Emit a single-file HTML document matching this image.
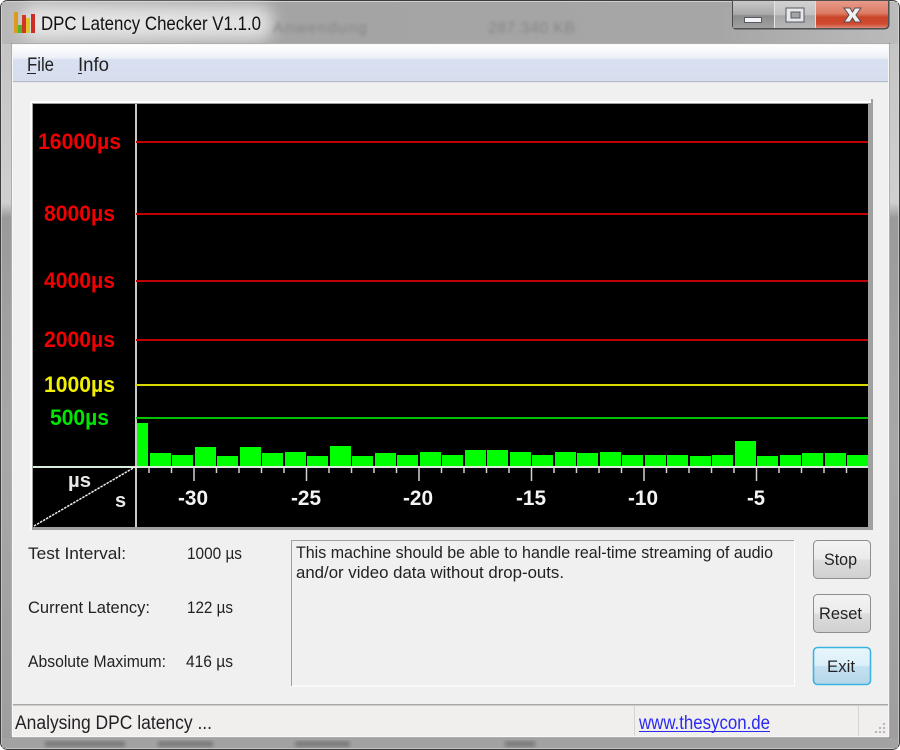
<!DOCTYPE html>
<html><head><meta charset="utf-8"><style>
html,body{margin:0;padding:0;background:#a5a5a5;width:900px;height:750px;overflow:hidden}
svg{display:block}
text{font-family:"Liberation Sans",sans-serif}
</style></head><body>
<svg width="900" height="750" viewBox="0 0 900 750" xmlns="http://www.w3.org/2000/svg">
<defs>
<linearGradient id="frame" x1="0" y1="0" x2="0" y2="1"><stop offset="0" stop-color="#c2c2c2"/><stop offset=".27" stop-color="#cfcfcf"/><stop offset=".29" stop-color="#9a9a9a"/><stop offset=".6" stop-color="#a8a8a8"/><stop offset="1" stop-color="#9e9e9e"/></linearGradient>
<linearGradient id="top" x1="0" y1="0" x2="1" y2="0"><stop offset="0" stop-color="#b8b8b8"/><stop offset=".3" stop-color="#a4a4a4"/><stop offset=".8" stop-color="#a6a6a6"/><stop offset="1" stop-color="#bbb"/></linearGradient>
<linearGradient id="menu" x1="0" y1="0" x2="0" y2="1"><stop offset="0" stop-color="#fff"/><stop offset=".36" stop-color="#edf0f8"/><stop offset=".4" stop-color="#d9e0f0"/><stop offset="1" stop-color="#d6ddee"/></linearGradient>
<linearGradient id="btn" x1="0" y1="0" x2="0" y2="1"><stop offset="0" stop-color="#f4f4f4"/><stop offset=".48" stop-color="#ebebeb"/><stop offset=".52" stop-color="#dddddd"/><stop offset="1" stop-color="#d0d0d0"/></linearGradient>
<linearGradient id="btnx" x1="0" y1="0" x2="0" y2="1"><stop offset="0" stop-color="#e9f6fc"/><stop offset=".48" stop-color="#dceff9"/><stop offset=".52" stop-color="#c4e1f1"/><stop offset="1" stop-color="#b4d6e8"/></linearGradient>
<linearGradient id="wmin" x1="0" y1="0" x2="0" y2="1"><stop offset="0" stop-color="#c8c8c8"/><stop offset=".5" stop-color="#a8a8a8"/><stop offset=".55" stop-color="#8c8c8c"/><stop offset="1" stop-color="#a0a0a0"/></linearGradient>
<linearGradient id="wmax" x1="0" y1="0" x2="0" y2="1"><stop offset="0" stop-color="#d2d2d2"/><stop offset=".5" stop-color="#c2c2c2"/><stop offset=".55" stop-color="#a8a8a8"/><stop offset="1" stop-color="#b6b6b6"/></linearGradient>
<linearGradient id="wcl" x1="0" y1="0" x2="0" y2="1"><stop offset="0" stop-color="#e79a88"/><stop offset=".45" stop-color="#dd7c66"/><stop offset=".6" stop-color="#c94428"/><stop offset=".85" stop-color="#cf4a2e"/><stop offset="1" stop-color="#dd8a78"/></linearGradient>
<filter id="bl"><feGaussianBlur stdDeviation="1.8"/></filter>
<filter id="bl5" x="-20%" y="-60%" width="140%" height="220%"><feGaussianBlur stdDeviation="8"/></filter>
</defs>

<!-- glass frame -->
<rect width="900" height="750" fill="#fff"/>
<rect x="0.5" y="0.5" width="899" height="749" rx="7" fill="url(#frame)" stroke="#3c3c3c"/>
<rect x="1.5" y="1.5" width="897" height="747" rx="6" fill="none" stroke="#dcdcdc" stroke-opacity=".55"/>
<rect x="2" y="2" width="896" height="42" fill="url(#top)"/>
<rect x="2" y="738" width="896" height="10" fill="#a2a2a2"/>
<g filter="url(#bl)" fill="#7c7c7c">
<rect x="45" y="741" width="80" height="6"/><rect x="158" y="741" width="55" height="6"/><rect x="295" y="741" width="55" height="6"/><rect x="505" y="741" width="30" height="6"/>
</g>
<rect x="22" y="6" width="250" height="34" rx="12" fill="#f2f2f2" opacity=".8" filter="url(#bl5)"/>
<text x="273" y="33" font-size="16" fill="#858585" filter="url(#bl)" textLength="94">Anwendung</text>
<text x="488" y="33" font-size="16" fill="#858585" filter="url(#bl)" textLength="87">287.340 KB</text>

<!-- title icon -->
<rect x="14" y="12" width="4" height="21" fill="#dc9a1e"/>
<rect x="18" y="25" width="4" height="8" fill="#4db82a"/>
<rect x="22" y="15" width="4" height="18" fill="#d13525"/>
<rect x="26" y="18" width="4" height="15" fill="#e2c424"/>
<rect x="31" y="14" width="4" height="19" fill="#cf2c22"/>
<text x="41" y="30" font-size="19.500" fill="#111" textLength="220" lengthAdjust="spacingAndGlyphs">DPC Latency Checker V1.1.0</text>

<!-- window buttons -->
<path d="M732.5 0V25q0 4 4 4H884q5 0 5-5V0z" fill="#555" stroke="#4a4a4a"/>
<rect x="733" y="1" width="41" height="27" fill="url(#wmin)"/>
<rect x="775" y="1" width="40" height="27" fill="url(#wmax)"/>
<path d="M816 1H888V24q0 4-4 4H816z" fill="url(#wcl)"/>
<rect x="774" y="1" width="1" height="27" fill="#e5e5e5"/>
<rect x="815" y="1" width="1" height="27" fill="#f0d8d0"/>
<rect x="744.500" y="17.500" width="17" height="5" fill="#f4f4f4" stroke="#555a66"/>
<rect x="786" y="8" width="18" height="14" fill="#e8e8e8" stroke="#555a66"/>
<rect x="791" y="12" width="9" height="6" fill="#a4a4a4" stroke="#555a66"/>
<path d="M844 8h6l2.500 4 2.500-4h6l-5 7 5 7h-6l-2.500-4-2.500 4h-6l5-7z" fill="#f0f0f0" stroke="#5a4a50"/>

<!-- client -->
<rect x="11.500" y="43.500" width="878" height="694" fill="#f0f0f0" stroke="#5d5d5d"/>
<rect x="12" y="44" width="877" height="693" fill="none" stroke="#fff"/>
<rect x="13" y="45" width="875" height="36" fill="url(#menu)"/>
<rect x="13" y="81" width="875" height="1" fill="#b4bccc"/>
<rect x="13" y="82" width="875" height="1" fill="#e6e6e6"/>
<text x="27" y="71" font-size="19" fill="#222" textLength="27" lengthAdjust="spacingAndGlyphs">File</text>
<rect x="27" y="73" width="9" height="1" fill="#222"/>
<text x="78" y="71" font-size="19" fill="#222" textLength="31" lengthAdjust="spacingAndGlyphs">Info</text>
<rect x="78" y="73" width="4" height="1" fill="#222"/>

<!-- chart -->
<rect x="30" y="101" width="843" height="429" fill="#a0a0a0"/>
<path d="M30 101H871V103H32V530H30z" fill="#fff"/>
<rect x="871" y="99" width="2" height="4" fill="#a0a0a0"/>
<rect x="33" y="104" width="835" height="423" fill="#000"/>
<rect x="135" y="104" width="2" height="423" fill="#c8c8c8"/>
<g fill="#c00000">
<rect x="136" y="141" width="732" height="2"/>
<rect x="136" y="213" width="732" height="2"/>
<rect x="136" y="280" width="732" height="2"/>
<rect x="136" y="339" width="732" height="2"/>
</g>
<rect x="136" y="384" width="732" height="2" fill="#d8d800"/>
<rect x="136" y="417" width="732" height="2" fill="#00c000"/>
<g fill="#f00000" font-weight="bold" font-size="22">
<text x="38" y="149" textLength="83" lengthAdjust="spacingAndGlyphs">16000µs</text>
<text x="44" y="221" textLength="71" lengthAdjust="spacingAndGlyphs">8000µs</text>
<text x="44" y="288" textLength="71" lengthAdjust="spacingAndGlyphs">4000µs</text>
<text x="44" y="347" textLength="71" lengthAdjust="spacingAndGlyphs">2000µs</text>
</g>
<text x="44" y="392" font-weight="bold" font-size="22" fill="#f0f000" textLength="71" lengthAdjust="spacingAndGlyphs">1000µs</text>
<text x="50" y="425" font-weight="bold" font-size="22" fill="#00e600" textLength="59" lengthAdjust="spacingAndGlyphs">500µs</text>

<!-- bars -->
<g fill="#00ff00">
<rect x="137" y="423" width="11" height="43"/>
<rect x="150" y="453" width="21" height="13"/>
<rect x="172" y="455" width="21" height="11"/>
<rect x="195" y="447" width="21" height="19"/>
<rect x="217" y="456" width="21" height="10"/>
<rect x="240" y="447" width="21" height="19"/>
<rect x="262" y="453" width="21" height="13"/>
<rect x="285" y="452" width="21" height="14"/>
<rect x="307" y="456" width="21" height="10"/>
<rect x="330" y="446" width="21" height="20"/>
<rect x="352" y="456" width="21" height="10"/>
<rect x="375" y="453" width="21" height="13"/>
<rect x="397" y="455" width="21" height="11"/>
<rect x="420" y="452" width="21" height="14"/>
<rect x="442" y="455" width="21" height="11"/>
<rect x="465" y="450" width="21" height="16"/>
<rect x="487" y="450" width="21" height="16"/>
<rect x="510" y="452" width="21" height="14"/>
<rect x="532" y="455" width="21" height="11"/>
<rect x="555" y="452" width="21" height="14"/>
<rect x="577" y="453" width="21" height="13"/>
<rect x="600" y="452" width="21" height="14"/>
<rect x="622" y="455" width="21" height="11"/>
<rect x="645" y="455" width="21" height="11"/>
<rect x="667" y="455" width="21" height="11"/>
<rect x="690" y="456" width="21" height="10"/>
<rect x="712" y="455" width="21" height="11"/>
<rect x="735" y="441" width="21" height="25"/>
<rect x="757" y="456" width="21" height="10"/>
<rect x="780" y="455" width="21" height="11"/>
<rect x="802" y="453" width="21" height="13"/>
<rect x="825" y="453" width="21" height="13"/>
<rect x="847" y="455" width="21" height="11"/>
</g>
<rect x="33" y="466" width="835" height="2" fill="#dcecdc"/>
<path d="M149 468v5M171.500 468v5M216.500 468v5M239 468v5M261.500 468v5M284 468v5M329 468v5M351.500 468v5M374 468v5M396.500 468v5M441.500 468v5M464 468v5M486.500 468v5M509 468v5M554 468v5M576.500 468v5M599 468v5M621.500 468v5M666.500 468v5M689 468v5M711.500 468v5M734 468v5M779 468v5M801.500 468v5M824 468v5M846.500 468v5" stroke="#d0d0d0" stroke-width="1.500" fill="none"/>
<path d="M194 468v13M306.500 468v13M419 468v13M531.500 468v13M644 468v13M756.500 468v13" stroke="#d0d0d0" stroke-width="1.500" fill="none"/>
<line x1="34" y1="526" x2="135" y2="467" stroke="#eeeeee" stroke-width="1.500" stroke-dasharray="2.500 1"/>
<text x="68" y="487" font-weight="bold" font-size="20" fill="#e8e8e8" textLength="23" lengthAdjust="spacingAndGlyphs">µs</text>
<text x="115" y="507" font-weight="bold" font-size="20" fill="#e8e8e8">s</text>
<g font-weight="bold" font-size="21" fill="#f4f4f4">
<text x="178" y="505" textLength="30" lengthAdjust="spacingAndGlyphs">-30</text>
<text x="291" y="505" textLength="30" lengthAdjust="spacingAndGlyphs">-25</text>
<text x="403" y="505" textLength="30" lengthAdjust="spacingAndGlyphs">-20</text>
<text x="516" y="505" textLength="30" lengthAdjust="spacingAndGlyphs">-15</text>
<text x="628" y="505" textLength="30" lengthAdjust="spacingAndGlyphs">-10</text>
<text x="747" y="505" textLength="18" lengthAdjust="spacingAndGlyphs">-5</text>
</g>

<!-- stats -->
<g font-size="17" fill="#222">
<text x="28" y="559" textLength="98" lengthAdjust="spacingAndGlyphs">Test Interval:</text>
<text x="187" y="559" textLength="55" lengthAdjust="spacingAndGlyphs">1000 µs</text>
<text x="28" y="613" textLength="122" lengthAdjust="spacingAndGlyphs">Current Latency:</text>
<text x="187" y="613" textLength="46" lengthAdjust="spacingAndGlyphs">122 µs</text>
<text x="28" y="667" textLength="138" lengthAdjust="spacingAndGlyphs">Absolute Maximum:</text>
<text x="186" y="667" textLength="47" lengthAdjust="spacingAndGlyphs">416 µs</text>
</g>

<!-- message box -->
<path d="M291.500 686V540.500H794" fill="none" stroke="#a0a0a0"/>
<path d="M292 686H794.500V541" fill="none" stroke="#fff"/>
<g font-size="17" fill="#222">
<text x="296" y="558" textLength="477" lengthAdjust="spacingAndGlyphs">This machine should be able to handle real-time streaming of audio</text>
<text x="296" y="578" textLength="268" lengthAdjust="spacingAndGlyphs">and/or video data without drop-outs.</text>
</g>

<!-- buttons -->
<rect x="813.500" y="540.500" width="57" height="38" rx="4" fill="url(#btn)" stroke="#8e8e8e"/>
<rect x="813.500" y="594.500" width="57" height="38" rx="4" fill="url(#btn)" stroke="#8e8e8e"/>
<rect x="813.500" y="647.500" width="57" height="37" rx="4" fill="url(#btnx)" stroke="#3cb4e0" stroke-width="1.600"/>
<g font-size="17" fill="#222">
<text x="824" y="565" textLength="33" lengthAdjust="spacingAndGlyphs">Stop</text>
<text x="819" y="619" textLength="43" lengthAdjust="spacingAndGlyphs">Reset</text>
<text x="827" y="672" textLength="28" lengthAdjust="spacingAndGlyphs">Exit</text>
</g>

<!-- status bar -->
<rect x="13" y="704" width="875" height="1.500" fill="#a8a8a8"/>
<rect x="13" y="706" width="875" height="30" fill="#f1eeee"/>
<text x="15" y="729" font-size="19" fill="#222" textLength="197" lengthAdjust="spacingAndGlyphs">Analysing DPC latency ...</text>
<rect x="634" y="706" width="1" height="30" fill="#d8d4d4"/>
<rect x="858" y="706" width="1" height="30" fill="#d8d4d4"/>
<text x="639" y="729" font-size="19" fill="#2a2af0" textLength="131" lengthAdjust="spacingAndGlyphs">www.thesycon.de</text>
<rect x="639" y="731" width="131" height="1" fill="#2a2af0"/>
<g fill="#b8b4b4">
<rect x="883" y="723" width="2" height="2"/><rect x="879" y="727" width="2" height="2"/><rect x="883" y="727" width="2" height="2"/>
<rect x="875" y="731" width="2" height="2"/><rect x="879" y="731" width="2" height="2"/><rect x="883" y="731" width="2" height="2"/>
</g>
</svg>
</body></html>
